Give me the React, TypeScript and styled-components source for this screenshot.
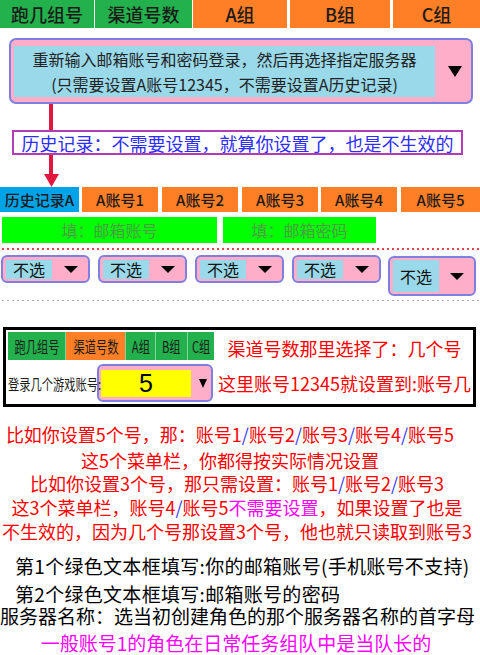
import React from 'react';
import styled, { createGlobalStyle } from 'styled-components';

const GREEN = '#22b14c';
const ORANGE = '#ff7f27';
const PINK = '#ffaec9';
const SKY = '#99d9ea';
const LAVENDER = '#7f7fdf';
const ARROW_RED = '#e0173f';

const GlobalStyle = createGlobalStyle`
	body {
		margin: 0;
		background: #fff;
		font-family: "Noto Sans CJK SC", "Noto Sans", sans-serif;
		overflow: hidden;
	}
`;

const topTabs = [
	{ label: '跑几组号', w: 94, bg: GREEN, gap: 0 },
	{ label: '渠道号数', w: 97, bg: GREEN, gap: 1 },
	{ label: 'A组', w: 94, bg: ORANGE, gap: 1 },
	{ label: 'B组', w: 100, bg: ORANGE, gap: 3 },
	{ label: 'C组', w: 87, bg: ORANGE, gap: 3 },
];

const subTabs = [
	{ label: '历史记录A', w: 79, bg: '#00a2e8', gap: 0 },
	{ label: 'A账号1', w: 76, bg: ORANGE, gap: 3 },
	{ label: 'A账号2', w: 76, bg: ORANGE, gap: 4 },
	{ label: 'A账号3', w: 76, bg: ORANGE, gap: 4 },
	{ label: 'A账号4', w: 76, bg: ORANGE, gap: 3 },
	{ label: 'A账号5', w: 79, bg: ORANGE, gap: 4 },
];

const miniTabs = [
	{ label: '跑几组号', w: 57, bg: GREEN },
	{ label: '渠道号数', w: 59, bg: ORANGE },
	{ label: 'A组', w: 29, bg: GREEN },
	{ label: 'B组', w: 31, bg: GREEN },
	{ label: 'C组', w: 26, bg: GREEN },
];

export default function App() {
	return (
		<>
			<GlobalStyle />
			<Page>
				<TabBar $h={28}>
					{topTabs.map((t) => (
						<Tab key={t.label} $w={t.w} $bg={t.bg} $gap={t.gap} $size={18}>
							{t.label}
						</Tab>
					))}
				</TabBar>

				<BigSelect>
					<BigValue>
						<span>重新输入邮箱账号和密码登录，然后再选择指定服务器</span>
						<span>(只需要设置A账号12345，不需要设置A历史记录)</span>
					</BigValue>
					<CaretArea>
						<Caret $w={15} $h={11} />
					</CaretArea>
				</BigSelect>

				<Pointer width="15" height="26" viewBox="0 0 15 26">
					<rect x="5" y="0" width="4" height="26" fill={ARROW_RED} />
				</Pointer>

				<NoteBox>历史记录：不需要设置，就算你设置了，也是不生效的</NoteBox>

				<Pointer width="15" height="32" viewBox="0 0 15 32">
					<rect x="5" y="0" width="4" height="21" fill={ARROW_RED} />
					<polygon points="0,19 15,19 7.5,32" fill={ARROW_RED} />
				</Pointer>

				<TabBar $h={25}>
					{subTabs.map((t) => (
						<Tab key={t.label} $w={t.w} $bg={t.bg} $gap={t.gap} $size={15}>
							{t.label}
						</Tab>
					))}
				</TabBar>

				<InputRow>
					<GreenInput $w={215}>填：邮箱账号</GreenInput>
					<GreenInput $w={153}>填：邮箱密码</GreenInput>
				</InputRow>

				<DotLine $color="#e04848" $h={2} />

				<SelectRow>
					{[0, 1, 2, 3].map((i) => (
						<SmallSelect key={i}>
							<SmallValue>不选</SmallValue>
							<CaretArea>
								<Caret $w={14} $h={7} />
							</CaretArea>
						</SmallSelect>
					))}
					<SmallSelect $tall>
						<SmallValue $tall>不选</SmallValue>
						<CaretArea>
							<Caret $w={14} $h={7} />
						</CaretArea>
					</SmallSelect>
				</SelectRow>

				<DotLine $color="#a8a8a8" $h={1} />

				<Frame>
					<MiniBar>
						{miniTabs.map((t) => (
							<MiniTab key={t.label} $w={t.w} $bg={t.bg}>
								<Squeeze>{t.label}</Squeeze>
							</MiniTab>
						))}
					</MiniBar>
					<FrameNote $top={4}>渠道号数那里选择了：几个号</FrameNote>
					<CountRow>
						<CountLabel>
							<Squeeze $origin="left">登录几个游戏账号:</Squeeze>
						</CountLabel>
						<CountSelect>
							<CountValue>5</CountValue>
							<CaretArea>
								<Caret $w={9} $h={9} />
							</CaretArea>
						</CountSelect>
					</CountRow>
					<FrameNote $top={-2}>这里账号12345就设置到:账号几</FrameNote>
				</Frame>

				<RedLine $mt={16} $shift={20}>
					比如你设置5个号，那：账号1<Slash>/</Slash>账号2<Slash>/</Slash>账号3
					<Slash>/</Slash>账号4<Slash>/</Slash>账号5
				</RedLine>
				<RedLine $mt={3} $shift={20}>这5个菜单栏，你都得按实际情况设置</RedLine>
				<RedLine $mt={0} $shift={6}>
					比如你设置3个号，那只需设置：账号1<Slash>/</Slash>账号2<Slash>/</Slash>账号3
				</RedLine>
				<RedLine $mt={1} $shift={6}>
					这3个菜单栏，账号4<Slash>/</Slash>账号5<Pink>不需要设置</Pink>，如果设置了也是
				</RedLine>
				<RedLine $mt={1} $shift={6}>不生效的，因为几个号那设置3个号，他也就只读取到账号3</RedLine>

				<InfoLine $mt={12} $indent={15}>
					第1个绿色文本框填写:你的邮箱账号(手机账号不支持)
				</InfoLine>
				<InfoLine $mt={6} $indent={15}>
					第2个绿色文本框填写:邮箱账号的密码
				</InfoLine>
				<InfoLine $mt={0} $indent={0}>
					服务器名称：选当初创建角色的那个服务器名称的首字母
				</InfoLine>
				<LeaderLine>一般账号1的角色在日常任务组队中是当队长的</LeaderLine>
			</Page>
		</>
	);
}

const Page = styled.main`
	width: 480px;
	height: 655px;
	display: flex;
	flex-direction: column;
`;

const TabBar = styled.div<{ $h: number }>`
	display: flex;
	height: ${({ $h }) => $h}px;
	flex: none;
`;

interface TabProps {
	$w: number;
	$bg: string;
	$gap: number;
	$size: number;
}

const Tab = styled.div<TabProps>`
	width: ${({ $w }) => $w}px;
	margin-left: ${({ $gap }) => $gap}px;
	background: ${({ $bg }) => $bg};
	display: flex;
	align-items: center;
	justify-content: center;
	font-size: ${({ $size }) => $size}px;
	font-weight: 500;
	color: #1b1b1b;
	white-space: nowrap;
`;

const BigSelect = styled.div`
	box-sizing: border-box;
	width: 464px;
	height: 66px;
	margin: 10px 0 0 9px;
	border: 2px solid ${LAVENDER};
	border-radius: 7px;
	background: ${PINK};
	display: flex;
	padding: 6px 0 5px 3px;
	flex: none;
`;

const BigValue = styled.div`
	width: 421px;
	background: ${SKY};
	display: flex;
	flex-direction: column;
	align-items: center;
	justify-content: center;
	font-size: 16px;
	line-height: 25px;
	color: #222;
	white-space: nowrap;
`;

const CaretArea = styled.div`
	flex: 1;
	display: flex;
	align-items: center;
	justify-content: center;
`;

const Caret = styled.div<{ $w: number; $h: number }>`
	width: 0;
	height: 0;
	border-left: ${({ $w }) => $w / 2}px solid transparent;
	border-right: ${({ $w }) => $w / 2}px solid transparent;
	border-top: ${({ $h }) => $h}px solid #000;
	margin-left: 3px;
`;

const Pointer = styled.svg`
	display: block;
	margin-left: 44px;
	flex: none;
`;

const NoteBox = styled.div`
	box-sizing: border-box;
	width: 451px;
	height: 25px;
	margin-left: 12px;
	border: 2px solid #b23cb6;
	display: flex;
	align-items: center;
	justify-content: center;
	font-size: 18px;
	color: #2d2dff;
	white-space: nowrap;
	flex: none;
`;

const InputRow = styled.div`
	display: flex;
	gap: 6px;
	margin: 5px 0 0 2px;
	height: 26px;
	flex: none;
`;

const GreenInput = styled.div<{ $w: number }>`
	width: ${({ $w }) => $w}px;
	background: #00ff00;
	display: flex;
	align-items: center;
	justify-content: center;
	font-size: 16px;
	color: #4b9e42;
	white-space: nowrap;
`;

const DotLine = styled.div<{ $color: string; $h: number }>`
	height: ${({ $h }) => $h}px;
	margin: ${({ $h }) => ($h === 2 ? '5px 0 0 2px' : '4px 0 0 2px')};
	background: repeating-linear-gradient(
		90deg,
		${({ $color }) => $color} 0 2px,
		transparent 2px 5px
	);
	flex: none;
`;

const SelectRow = styled.div`
	display: flex;
	align-items: flex-start;
	gap: 8px;
	margin: 5px 0 0 1px;
	height: 41px;
	flex: none;
`;

const SmallSelect = styled.div<{ $tall?: boolean }>`
	box-sizing: border-box;
	width: ${({ $tall }) => ($tall ? 88 : 89)}px;
	height: ${({ $tall }) => ($tall ? 40 : 28)}px;
	margin-top: ${({ $tall }) => ($tall ? 1 : 0)}px;
	margin-left: ${({ $tall }) => ($tall ? -1 : 0)}px;
	border: 2px solid ${LAVENDER};
	border-radius: 6px;
	background: ${PINK};
	display: flex;
	align-items: center;
	padding: 0 2px 0 3px;
`;

const SmallValue = styled.div<{ $tall?: boolean }>`
	width: 46px;
	height: ${({ $tall }) => ($tall ? 32 : 19)}px;
	background: ${SKY};
	display: flex;
	align-items: center;
	padding-left: 7px;
	box-sizing: border-box;
	font-size: 16px;
	color: #111;
	white-space: nowrap;
`;

const Frame = styled.section`
	box-sizing: border-box;
	width: 473px;
	height: 80px;
	margin: 26px 0 0 3px;
	border: 3px solid #000;
	padding: 2px 0 0 2px;
	display: grid;
	grid-template-columns: 208px 1fr;
	grid-template-rows: 28px 38px;
	row-gap: 4px;
	flex: none;
`;

const MiniBar = styled.div`
	display: flex;
	gap: 1px;
	background: #7fd69a;
	width: 206px;
`;

const MiniTab = styled.div<{ $w: number; $bg: string }>`
	width: ${({ $w }) => $w}px;
	flex: none;
	background: ${({ $bg }) => $bg};
	display: flex;
	align-items: center;
	justify-content: center;
	overflow: hidden;
`;

const Squeeze = styled.span<{ $origin?: string }>`
	display: inline-block;
	font-size: 16px;
	color: #1b1b1b;
	white-space: nowrap;
	transform: scaleX(0.7);
	transform-origin: ${({ $origin }) => $origin || 'center'};
`;

const CountRow = styled.div`
	display: flex;
	align-items: center;
`;

const CountLabel = styled.div`
	width: 89px;
	flex: none;
	overflow: visible;
	display: flex;
	align-items: center;
	& > span {
		font-size: 15px;
		transform: scaleX(0.75);
	}
`;

const CountSelect = styled.div`
	box-sizing: border-box;
	width: 116px;
	height: 38px;
	border: 2px solid ${LAVENDER};
	border-radius: 6px;
	background: ${PINK};
	display: flex;
	align-items: center;
	padding: 0 0 0 2px;
`;

const CountValue = styled.div`
	width: 90px;
	height: 27px;
	background: #ffff00;
	display: flex;
	align-items: center;
	justify-content: center;
	font-family: "Liberation Sans", Arial, sans-serif;
	font-size: 25px;
	color: #000;
`;

const FrameNote = styled.div<{ $top: number }>`
	display: flex;
	align-items: center;
	justify-content: center;
	padding-top: ${({ $top }) => $top}px;
	font-size: 18px;
	color: #ff0000;
	white-space: nowrap;
`;

const RedLine = styled.p<{ $mt: number; $shift: number }>`
	margin: ${({ $mt }) => $mt}px 0 0;
	padding-right: ${({ $shift }) => $shift}px;
	text-align: center;
	font-size: 18px;
	line-height: 23px;
	color: #ff0000;
	white-space: nowrap;
`;

const Slash = styled.span`
	color: #3b3bff;
`;

const Pink = styled.span`
	color: #ff00ff;
`;

const InfoLine = styled.p<{ $mt: number; $indent: number }>`
	margin: ${({ $mt }) => $mt}px 0 0;
	padding-left: ${({ $indent }) => $indent}px;
	font-size: 19px;
	line-height: 22px;
	letter-spacing: ${({ $indent }) => ($indent > 0 ? 0.3 : 0)}px;
	color: #000;
	white-space: nowrap;
`;

const LeaderLine = styled.p`
	margin: 5px 0 0;
	padding-right: 8px;
	text-align: center;
	font-size: 19px;
	line-height: 22px;
	color: #ff00ff;
	white-space: nowrap;
`;
